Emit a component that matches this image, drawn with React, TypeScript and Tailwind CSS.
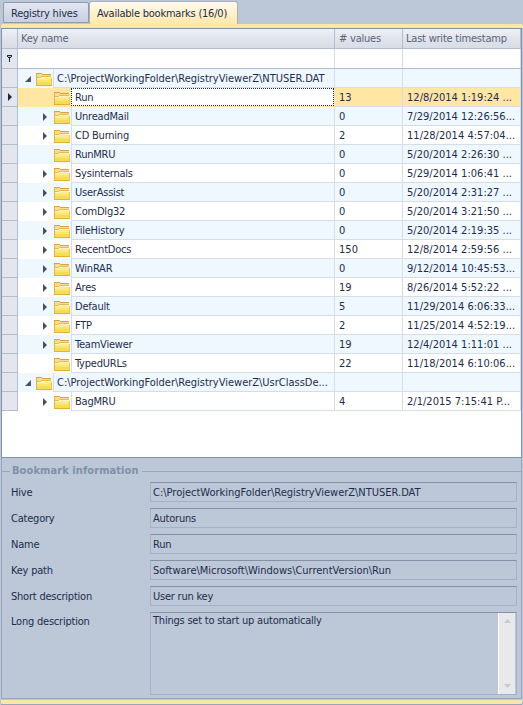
import type { ReactNode } from 'react';

type Row = { name: string; values?: string; time?: string; arrow?: boolean; root?: boolean; selected?: boolean };

const rows: Row[] = [
  { name: 'C:\\ProjectWorkingFolder\\RegistryViewerZ\\NTUSER.DAT', root: true },
  { name: 'Run', values: '13', time: '12/8/2014 1:19:24 ...', selected: true },
  { name: 'UnreadMail', values: '0', time: '7/29/2014 12:26:56...', arrow: true },
  { name: 'CD Burning', values: '2', time: '11/28/2014 4:57:04...', arrow: true },
  { name: 'RunMRU', values: '0', time: '5/20/2014 2:26:30 ...' },
  { name: 'Sysinternals', values: '0', time: '5/29/2014 1:06:41 ...', arrow: true },
  { name: 'UserAssist', values: '0', time: '5/20/2014 2:31:27 ...', arrow: true },
  { name: 'ComDlg32', values: '0', time: '5/20/2014 3:21:50 ...', arrow: true },
  { name: 'FileHistory', values: '0', time: '5/20/2014 2:19:35 ...', arrow: true },
  { name: 'RecentDocs', values: '150', time: '12/8/2014 2:59:56 ...', arrow: true },
  { name: 'WinRAR', values: '0', time: '9/12/2014 10:45:53...', arrow: true },
  { name: 'Ares', values: '19', time: '8/26/2014 5:52:22 ...', arrow: true },
  { name: 'Default', values: '5', time: '11/29/2014 6:06:33...', arrow: true },
  { name: 'FTP', values: '2', time: '11/25/2014 4:52:19...', arrow: true },
  { name: 'TeamViewer', values: '19', time: '12/4/2014 1:11:01 ...', arrow: true },
  { name: 'TypedURLs', values: '22', time: '11/18/2014 6:10:06...' },
  { name: 'C:\\ProjectWorkingFolder\\RegistryViewerZ\\UsrClassDe...', root: true },
  { name: 'BagMRU', values: '4', time: '2/1/2015 7:15:41 P...', arrow: true },
];

const fields = [
  ['Hive', 'C:\\ProjectWorkingFolder\\RegistryViewerZ\\NTUSER.DAT'],
  ['Category', 'Autoruns'],
  ['Name', 'Run'],
  ['Key path', 'Software\\Microsoft\\Windows\\CurrentVersion\\Run'],
  ['Short description', 'User run key'],
];

function Folder() {
  return (
    <svg width="17" height="14" viewBox="0 0 17 14" className="shrink-0" shapeRendering="crispEdges">
      <path d="M0 0h6v1h9v12H0z" fill="#f9e67e" />
      <path d="M0 0h6v1H0zM6 1h9v1H6z" fill="#dc9f45" />
      <path d="M0 1h1v11H0z" fill="#e6b04c" />
      <path d="M1 1h5v1H1z" fill="#f7dc9a" />
      <path d="M1 2h14v1H1z" fill="#f8dd92" />
      <path d="M5 3h10v1H5zM1 4h4v1H1z" fill="#e9b94f" />
      <path d="M5 4h11v1H5zM1 5h4v1H1z" fill="#fff5bd" />
      <path d="M5 5h11v2H1V6h4z" fill="#fbec93" />
      <path d="M1 7h15v2H1z" fill="#f9e573" />
      <path d="M1 9h15v3H1z" fill="#f5dc55" />
      <path d="M0 12h16v1H0z" fill="#e5ae37" />
      <path d="M15 5h1v7h-1z" fill="#eec64a" />
    </svg>
  );
}

function Cell({ className, children }: { className: string; children?: ReactNode }) {
  return (
    <div className={`h-[19px] shrink-0 overflow-hidden border-b border-r border-[#d6dce9] leading-[19px] ${className}`}>
      {children}
    </div>
  );
}

function TreeRow({ row, index }: { row: Row; index: number }) {
  const bg = row.selected ? 'bg-[#ffe6a2]' : index % 2 === 0 ? 'bg-[#eff7ff]' : 'bg-white';
  return (
    <div className={`flex h-[19px] ${bg}`}>
      <div className="flex w-4 shrink-0 items-center border-b border-r border-[#b4bdd0] bg-[#e3e6ee] pl-[6px]">
        {row.selected && (
          <svg width="4" height="8" viewBox="0 0 4 8">
            <path d="M0 0l4 4-4 4H0z" fill="#1c2740" />
          </svg>
        )}
      </div>
      <div className={`flex shrink-0 ${row.root ? 'w-[35px]' : 'w-[53px]'}`}>
        <div className={`flex h-[19px] shrink-0 items-center ${row.root ? 'w-[18px] pl-[7px] pt-[1px]' : 'w-9 pl-[25px]'}`}>
          {row.root && (
            <svg width="6" height="6" viewBox="0 0 6 6">
              <path d="M6 0v6H0z" fill="#4b5264" />
            </svg>
          )}
          {row.arrow && (
            <svg width="4" height="8" viewBox="0 0 4 8">
              <path d="M0 0l4 4-4 4z" fill="#465064" />
            </svg>
          )}
        </div>
        <div className="pt-[4px]">
          <Folder />
        </div>
      </div>
      {row.selected ? (
        <div className="mr-px h-[18px] w-[263px] shrink-0 border border-dotted border-[#1c2740] bg-white pl-[3px] leading-[17px]">
          {row.name}
        </div>
      ) : (
        <Cell className={`border-l pl-[3px] ${row.root ? 'w-[282px] tracking-[-0.01px]' : 'w-[264px]'}`}>{row.name}</Cell>
      )}
      <Cell className="w-[68px] pl-[4px] tracking-[0.02px]">{row.values}</Cell>
      <Cell className="w-[118px] pl-[4px] tracking-[0.02px]">{row.time}</Cell>
    </div>
  );
}

export default function App() {
  return (
    <div className="flex h-[705px] w-[523px] flex-col overflow-hidden whitespace-pre bg-[#bcc7d8] font-['DejaVu_Sans_Condensed','DejaVu_Sans',sans-serif] text-[11px] tracking-[-0.22px] text-[#1e2d4c] [font-stretch:condensed]">
      <div className="flex h-6 shrink-0 items-end pl-[3px]">
        <div className="mb-px h-[21px] w-[86px] rounded-t-[2px] border border-[#8e9bb6] bg-linear-to-b from-[#e3e7f1] to-[#c7cede] pl-[7px] leading-[21px]">
          Registry hives
        </div>
        <div className="h-[23px] w-[149px] rounded-t-[3px] border border-b-0 border-[#a9b0bb] bg-linear-to-b from-[#fffaf0] to-[#ffe8a6] pl-[7px] leading-[23px]">
          Available bookmarks (16/0)
        </div>
      </div>
      <div className="ml-px h-1 w-[522px] shrink-0 rounded-t-[2px] bg-[#ffe6a2]" />
      <div className="ml-px flex h-[430px] w-[521px] shrink-0 flex-col border border-[#8591a8] bg-white">
        <div className="flex h-5 shrink-0 border-b border-[#b4bdd0] bg-linear-to-b from-[#eef0f5] via-[#e1e4eb] to-[#d8dce6] leading-[19px] text-[#5a6479]">
          <div className="w-4 border-r border-[#b4bdd0]" />
          <div className="w-[317px] border-r border-[#b4bdd0] pl-[3px]">Key name</div>
          <div className="w-[68px] border-r border-[#b4bdd0] pl-[4px]"># values</div>
          <div className="w-[118px] border-r border-[#b4bdd0] pl-[3px]">Last write timestamp</div>
        </div>
        <div className="flex h-5 shrink-0 border-b border-[#b4bdd0]">
          <div className="w-4 border-r border-[#b4bdd0] bg-[#e3e6ee] pl-[5px] pt-[6px]">
            <svg width="5" height="7" viewBox="0 0 5 7" shapeRendering="crispEdges">
              <path d="M0 0h5v2H4v1H3v4H2V3H1V2H0z" fill="#1c2740" />
              <path d="M1 1h3v1H1z" fill="#b9bfcc" />
            </svg>
          </div>
          <div className="w-[317px] border-r border-[#d6dce9]" />
          <div className="w-[68px] border-r border-[#d6dce9]" />
          <div className="w-[118px] border-r border-[#d6dce9]" />
        </div>
        {rows.map((row, i) => (
          <TreeRow key={row.name} row={row} index={i} />
        ))}
      </div>
      <div className="ml-px flex h-[241px] w-[521px] shrink-0 flex-col border-x border-b border-[#97a5be]">
        <div className="flex h-6 shrink-0 items-center pt-0.5">
          <div className="w-2 border-t border-[#97a5be]" />
          <div className="w-[132px] pl-[2px] font-bold tracking-[0.08px] text-[#8190a9]">Bookmark information</div>
          <div className="flex-1 border-t border-[#97a5be]" />
        </div>
        <div className="flex flex-col gap-1.5">
          {fields.map(([label, value]) => (
            <div key={label} className="flex h-5 leading-[21px]">
              <div className="w-[148px] pl-[9px]">{label}</div>
              <div
                className={`w-[367px] border border-[#a5b1c6] border-t-[#8390a7] pl-[2px] leading-[19px] ${value.includes('\\') ? 'tracking-[-0.01px]' : ''}`}
              >
                {value}
              </div>
            </div>
          ))}
          <div className="flex h-[83px]">
            <div className="w-[148px] pl-[9px] leading-[19px]">Long description</div>
            <div className="flex w-[367px] justify-between border border-[#a5b1c6] border-t-[#8390a7] pl-[2px] leading-[15px]">
              <div>Things set to start up automatically</div>
              <div className="mr-px flex w-[17px] flex-col items-center justify-between border-l border-white bg-[#e8e9eb] py-[6px]">
                <svg width="7" height="4" viewBox="0 0 7 4">
                  <path d="M3.5 0L7 4H0z" fill="#c8cacd" />
                </svg>
                <svg width="7" height="4" viewBox="0 0 7 4">
                  <path d="M3.5 4L7 0H0z" fill="#c8cacd" />
                </svg>
              </div>
            </div>
          </div>
        </div>
      </div>
      <div className="ml-px mt-px h-1 w-[521px] shrink-0 rounded-b-[2px] bg-[#ffe6a2]" />
      <div className="ml-px h-px w-[521px] bg-[#97a5be]" />
    </div>
  );
}
